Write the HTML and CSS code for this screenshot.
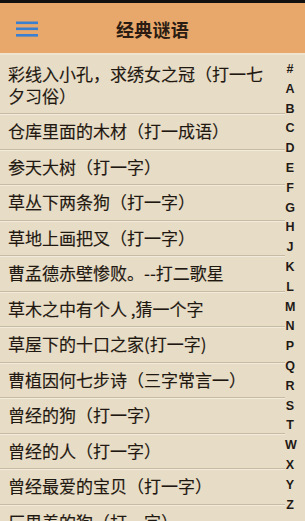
FILE: index.html
```html
<!DOCTYPE html>
<html lang="zh">
<head>
<meta charset="utf-8">
<title>经典谜语</title>
<link rel="stylesheet" href="styles.css">
</head>
<body>
<div class="app">
  <div class="statusbar"></div>
  <header class="topbar">
    <div class="menu">
      <svg width="22" height="16" viewBox="0 0 22 16">
        <rect x="0" y="0.5" width="22" height="2.6" fill="#3b7fd0"/>
        <rect x="0" y="6.5" width="22" height="2.6" fill="#3b7fd0"/>
        <rect x="0" y="13" width="22" height="2.6" fill="#3b7fd0"/>
      </svg>
    </div>
    <h1 class="title">经典谜语</h1>
    <div class="spacer"></div>
  </header>
  <main class="content">
    <ul class="list">
      <li class="row">彩线入小孔，求绣女之冠（打一七夕习俗）</li>
      <li class="row">仓库里面的木材（打一成语）</li>
      <li class="row">参天大树（打一字）</li>
      <li class="row">草丛下两条狗（打一字）</li>
      <li class="row">草地上画把叉（打一字）</li>
      <li class="row">曹孟德赤壁惨败。--打二歌星</li>
      <li class="row">草木之中有个人 ,猜一个字</li>
      <li class="row">草屋下的十口之家(打一字)</li>
      <li class="row">曹植因何七步诗（三字常言一）</li>
      <li class="row">曾经的狗（打一字）</li>
      <li class="row">曾经的人（打一字）</li>
      <li class="row">曾经最爱的宝贝（打一字）</li>
      <li class="row">厂里养的狗（打一字）</li>
    </ul>
    <nav class="index">
      <span>#</span><span>A</span><span>B</span><span>C</span><span>D</span><span>E</span><span>F</span><span>G</span><span>H</span><span>J</span><span>K</span><span>L</span><span>M</span><span>N</span><span>P</span><span>Q</span><span>R</span><span>S</span><span>T</span><span>W</span><span>X</span><span>Y</span><span>Z</span>
    </nav>
  </main>
</div>
</body>
</html>
```

FILE: styles.css
```css
* { box-sizing: border-box; }
html, body {
  margin: 0;
  padding: 0;
  width: 305px;
  height: 521px;
  overflow: hidden;
  background: #e7dcc6;
}
.app {
  width: 305px;
  height: 521px;
  overflow: hidden;
  display: flex;
  flex-direction: column;
  font-family: "Noto Sans CJK SC", "Liberation Sans", sans-serif;
}
.statusbar {
  height: 3px;
  background: #111;
  flex: none;
}
.topbar {
  flex: none;
  height: 52px;
  background: #e8a76b;
  display: grid;
  grid-template-columns: 1fr auto 1fr;
  align-items: center;
  border-bottom: 2px solid #efe4cf;
}
.menu {
  padding-left: 16px;
  display: flex;
  align-items: center;
  padding-top: 1px;
}
.menu svg { display: block; }
.title {
  margin: 0;
  font-size: 18px;
  font-weight: 700;
  color: #2a1c12;
  letter-spacing: 0.3px;
  line-height: 24px;
  padding-top: 2px;
}
.content {
  flex: 1;
  display: flex;
  min-height: 0;
}
.list {
  list-style: none;
  margin: 0;
  padding: 1.5px 0 0;
  width: 285px;
  flex: none;
}
.row {
  padding: 6.25px 8px;
  font-size: 17px;
  line-height: 22px;
  color: #1f1811;
  text-spacing-trim: space-all;
  -webkit-text-stroke: 0.15px #1f1811;
  border-bottom: 1px solid #c8bba4;
  box-shadow: 0 1px 0 #f2eadb;
}
.index {
  width: 20px;
  flex: none;
  padding-top: 5px;
  padding-right: 10px;
  display: flex;
  flex-direction: column;
}
.index span {
  height: 19.8px;
  line-height: 19.8px;
  text-align: center;
  font-family: "Liberation Sans", Arial, sans-serif;
  font-weight: 700;
  font-size: 12.5px;
  color: #1f1a16;
}
```
